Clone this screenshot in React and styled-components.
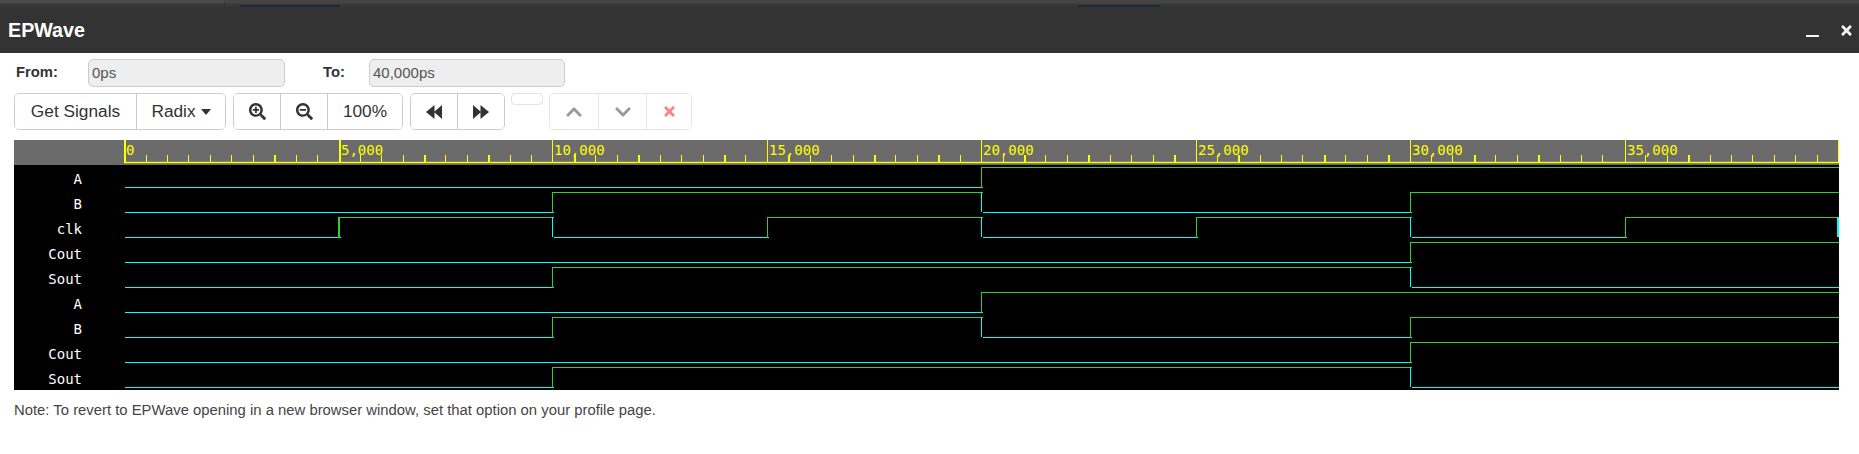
import React from "react";
import styled, { createGlobalStyle } from "styled-components";
import {
  FaSearchPlus,
  FaSearchMinus,
  FaChevronUp,
  FaChevronDown,
  FaTimes
} from "react-icons/fa";

const GlobalStyle = createGlobalStyle`
  html, body {
    margin: 0;
    padding: 0;
    background: #fff;
    font-family: "Liberation Sans", Arial, sans-serif;
    color: #333;
  }
  * {
    box-sizing: border-box;
  }
`;

const Page = styled.div`
  width: 1859px;
  height: 454px;
  overflow: hidden;
  background: #fff;
`;

const BackdropStrip = styled.div`
  height: 7px;
  display: flex;
  background: linear-gradient(#444 0, #444 3px, #3a3a3a 4px, #363636 7px);
`;

const BackdropTab = styled.div`
  width: ${props => props.width}px;
  height: 7px;
  flex: none;
  border-top: ${props => (props.raised ? "3px solid #4c4c4c" : "none")};
  border-right: ${props => (props.raised ? "1px solid #2f2f2f" : "none")};
  display: flex;
  align-items: flex-end;
`;

const BackdropLine = styled.div`
  width: ${props => props.width}px;
  height: 2px;
  background: #1c2a3a;
`;

const TitleBar = styled.div`
  height: 46px;
  background: #333;
  color: #fff;
  display: flex;
  align-items: center;
  justify-content: space-between;
  padding: 0 6px 0 8px;
`;

const Title = styled.div`
  font-size: 19.7px;
  font-weight: 700;
`;

const WindowControls = styled.div`
  display: flex;
  align-items: center;
  gap: 21px;
`;

const MinimizeMark = styled.div`
  width: 13px;
  height: 2px;
  margin-top: 12px;
  background: #f4f4f4;
`;

const CloseMark = styled(FaTimes)`
  width: 13px;
  height: 15px;
  color: #f4f4f4;
`;

const Controls = styled.div`
  padding: 6px 0 10px 14px;
  display: flex;
  flex-direction: column;
  gap: 6px;
`;

const RangeRow = styled.div`
  display: flex;
  align-items: center;
  height: 28px;
`;

const RangeLabel = styled.label`
  width: ${props => props.width}px;
  margin-left: ${props => props.offset}px;
  padding-bottom: 2px;
  font-size: 14.8px;
  font-weight: 700;
  color: #333;
`;

const RangeInput = styled.input`
  width: ${props => props.width}px;
  height: 28px;
  padding: 0 3px 2px;
  font: 15px "Liberation Sans", Arial, sans-serif;
  color: #555;
  background: #eee;
  border: 1px solid #ccc;
  border-radius: 5px;
  opacity: 1;
`;

const Toolbar = styled.div`
  display: flex;
  align-items: flex-start;
  gap: 7px;
`;

const ButtonGroup = styled.div`
  display: flex;
  height: 37px;
  border: 1px solid ${props => (props.disabled ? "#e6e6e6" : "#ccc")};
  border-radius: 5px;
  margin-left: ${props => props.offset || 0}px;
  overflow: hidden;
`;

const ToolButton = styled.button`
  width: ${props => props.width}px;
  padding: 0;
  display: flex;
  align-items: center;
  justify-content: center;
  gap: 5px;
  background: #fff;
  border: 0;
  border-left: 1px solid ${props => (props.disabled ? "#e6e6e6" : "#ccc")};
  font: 17.3px "Liberation Sans", Arial, sans-serif;
  color: #333;

  &:first-child {
    border-left: 0;
  }
`;

const Caret = styled.span`
  width: 0;
  height: 0;
  border-top: 6px solid #333;
  border-left: 5.5px solid transparent;
  border-right: 5.5px solid transparent;
`;

const EmptyButton = styled.div`
  width: 32px;
  height: 12px;
  margin-left: -1px;
  border: 1px solid #e3e3e3;
  border-radius: 4px;
`;

const iconColor = {
  dark: "#333",
  grey: "#999",
  red: "#ff8080"
};

const Glyph = styled.span`
  display: flex;
  color: ${props => iconColor[props.tone]};

  svg {
    width: ${props => props.size}px;
    height: ${props => props.size}px;
  }
`;

const WavePanel = styled.div`
  width: 1825px;
  margin-left: 14px;
`;

const RulerRow = styled.div`
  display: flex;
  height: 25px;
  background: #6b6b6b;
`;

const GutterSpacer = styled.div`
  width: 110px;
  flex: none;
`;

const WaveDrawing = styled.svg`
  display: block;
  flex: none;
`;

const RulerLabel = styled.text`
  font-family: "DejaVu Sans Mono", monospace;
  font-size: 14px;
  fill: #ffff00;
`;

const SignalArea = styled.div`
  display: flex;
  height: 225px;
  overflow: hidden;
  background: #000;
`;

const SignalNames = styled.div`
  width: 110px;
  flex: none;
  padding: 2px 42px 0 0;
`;

const SignalName = styled.div`
  height: 25px;
  line-height: 25px;
  text-align: right;
  font-family: "DejaVu Sans Mono", monospace;
  font-size: 14px;
  color: #fff;
`;

const Note = styled.p`
  margin: 12px 0 0 14px;
  font-size: 14.85px;
  line-height: 16px;
  color: #444;
`;

// pixel column of each 5,000ps mark, measured from the left edge of the page
const MARKS = [124, 339, 552, 767, 981, 1196, 1410, 1625, 1838];
const ORIGIN = 124;
const HEAVY_TICKS = [7, 14, 17, 21, 24, 28, 31, 35, 38, 42, 45, 49, 52, 56, 59, 63, 66, 70, 73];

// each signal: starting level is 0, the list holds the marks where it flips
const SIGNALS = [
  { name: "A", flips: [4] },
  { name: "B", flips: [2, 4, 6] },
  { name: "clk", flips: [1, 2, 3, 4, 5, 6, 7, 8] },
  { name: "Cout", flips: [6] },
  { name: "Sout", flips: [2, 6] },
  { name: "A", flips: [4] },
  { name: "B", flips: [2, 4, 6] },
  { name: "Cout", flips: [6] },
  { name: "Sout", flips: [2, 6] }
];

const LOW_COLOR = "#00ffff";
const HIGH_COLOR = "#32cd32";
const WAVE_END = 1839;

const BackIcon = () => (
  <svg viewBox="0 0 16 14" fill="currentColor">
    <path d="M0 7 8.5 0v14zM8 7l8-7v14z" />
  </svg>
);

const ForwardIcon = () => (
  <svg viewBox="0 0 16 14" fill="currentColor">
    <path d="M16 7 7.5 0v14zM8 7 0 0v14z" />
  </svg>
);

const Ruler = () => {
  const ticks = [];
  for (let n = 1; n < 80; n++) {
    if (n % 10 === 0) continue;
    ticks.push({
      n,
      x: Math.floor(124.6 + n * 21.425) - ORIGIN,
      heavy: HEAVY_TICKS.includes(n)
    });
  }
  return (
    <WaveDrawing width="1715" height="25" viewBox="0 0 1715 25">
      <rect x="0" y="21.8" width="1715" height="1.4" fill="#ffff00" />
      {MARKS.map((mark, i) => (
        <rect
          key={mark}
          x={mark - ORIGIN}
          y="0"
          width={i === 0 || i === 1 ? 2 : 1}
          height="23"
          fill="#ffff00"
        />
      ))}
      {ticks.map(tick => (
        <rect
          key={tick.n}
          x={tick.x}
          y="15"
          width={tick.heavy ? 2 : 1}
          height="8"
          fill="#ffff00"
        />
      ))}
      {MARKS.slice(0, -1).map((mark, i) => (
        <RulerLabel key={mark} x={mark - ORIGIN + 2} y="15">
          {(i * 5000).toLocaleString("en-US")}
        </RulerLabel>
      ))}
    </WaveDrawing>
  );
};

const Wave = ({ flips, row }) => {
  const highY = row * 25 + 2.5;
  const lowY = highY + 20;
  const parts = [];
  let level = 0;
  let from = 125;
  flips.forEach(mark => {
    const x = MARKS[mark];
    const y = level ? highY : lowY;
    const stroke = level ? HIGH_COLOR : LOW_COLOR;
    // the first and last marks are drawn two pixels wide in the reference
    const thick = mark === 1 || mark === 8;
    parts.push(<line key={`h${mark}`} x1={from} x2={x + 2} y1={y} y2={y} stroke={stroke} />);
    level = 1 - level;
    parts.push(
      <line
        key={`v${mark}`}
        x1={thick ? x : x + 0.5}
        x2={thick ? x : x + 0.5}
        y1={highY - 0.5}
        y2={level ? lowY + 0.5 : lowY - 0.5}
        stroke={level ? HIGH_COLOR : LOW_COLOR}
        strokeWidth={thick ? 2 : 1}
      />
    );
    // falling edges leave a small gap before the low line starts
    from = level ? x : x + 2;
  });
  const y = level ? highY : lowY;
  parts.push(
    <line key="tail" x1={from} x2={WAVE_END} y1={y} y2={y} stroke={level ? HIGH_COLOR : LOW_COLOR} />
  );
  return <g>{parts}</g>;
};

const Waves = () => (
  <WaveDrawing width="1715" height="225" viewBox="124 0 1715 225">
    {SIGNALS.map((signal, row) => (
      <Wave key={row} row={row} flips={signal.flips} />
    ))}
  </WaveDrawing>
);

const App = () => (
  <Page>
    <GlobalStyle />
    <BackdropStrip>
      <BackdropTab raised width={225} />
      <BackdropTab width={15} />
      <BackdropTab width={823}>
        <BackdropLine width={100} />
      </BackdropTab>
      <BackdropTab width={15} />
      <BackdropTab width={781}>
        <BackdropLine width={82} />
      </BackdropTab>
    </BackdropStrip>
    <TitleBar>
      <Title>EPWave</Title>
      <WindowControls>
        <MinimizeMark />
        <CloseMark />
      </WindowControls>
    </TitleBar>
    <Controls>
      <RangeRow>
        <RangeLabel width={72} offset={2}>From:</RangeLabel>
        <RangeInput width={197} value="0ps" readOnly />
        <RangeLabel width={46} offset={38}>To:</RangeLabel>
        <RangeInput width={196} value="40,000ps" readOnly />
      </RangeRow>
      <Toolbar>
        <ButtonGroup>
          <ToolButton width={121}>Get Signals</ToolButton>
          <ToolButton width={89}>
            Radix <Caret />
          </ToolButton>
        </ButtonGroup>
        <ButtonGroup>
          <ToolButton width={46}>
            <Glyph tone="dark" size={17}><FaSearchPlus /></Glyph>
          </ToolButton>
          <ToolButton width={47}>
            <Glyph tone="dark" size={17}><FaSearchMinus /></Glyph>
          </ToolButton>
          <ToolButton width={75}>100%</ToolButton>
        </ButtonGroup>
        <ButtonGroup>
          <ToolButton width={46}>
            <Glyph tone="dark" size={16}><BackIcon /></Glyph>
          </ToolButton>
          <ToolButton width={47}>
            <Glyph tone="dark" size={16}><ForwardIcon /></Glyph>
          </ToolButton>
        </ButtonGroup>
        <EmptyButton />
        <ButtonGroup disabled offset={-1}>
          <ToolButton disabled width={48}>
            <Glyph tone="grey" size={18}><FaChevronUp /></Glyph>
          </ToolButton>
          <ToolButton disabled width={48}>
            <Glyph tone="grey" size={18}><FaChevronDown /></Glyph>
          </ToolButton>
          <ToolButton disabled width={45}>
            <Glyph tone="red" size={15}><FaTimes /></Glyph>
          </ToolButton>
        </ButtonGroup>
      </Toolbar>
    </Controls>
    <WavePanel>
      <RulerRow>
        <GutterSpacer />
        <Ruler />
      </RulerRow>
      <SignalArea>
        <SignalNames>
          {SIGNALS.map((signal, row) => (
            <SignalName key={row}>{signal.name}</SignalName>
          ))}
        </SignalNames>
        <Waves />
      </SignalArea>
    </WavePanel>
    <Note>
      Note: To revert to EPWave opening in a new browser window, set that option on your profile page.
    </Note>
  </Page>
);

export default App;
